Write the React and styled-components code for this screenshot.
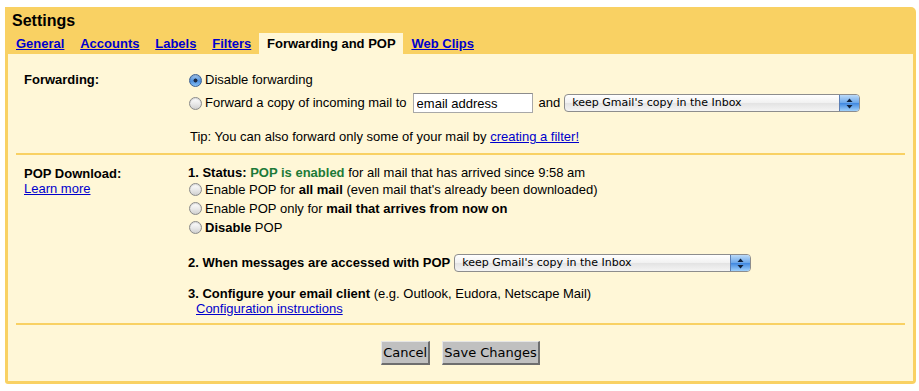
import React from "react";
import styled, { createGlobalStyle } from "styled-components";

const Global = createGlobalStyle`
  html, body { margin: 0; padding: 0; background: #ffffff; }
  body { font-family: "Liberation Sans", Arial, sans-serif; font-size: 13px; color: #000; }
`;

const YELLOW = "#f9d163";
const CREAM = "#fff7d7";
const LINK = "#0000cc";

const Panel = styled.div`
  margin: 7px 3px 0 5px;
  width: 911px;
  background: ${YELLOW};
  border-radius: 0 5px 4px 3px;
  padding: 0 3px 3px 3px;
  box-sizing: border-box;
`;

const Title = styled.h1`
  margin: 0;
  height: 26px;
  line-height: 27px;
  padding-left: 4px;
  font-size: 16px;
  font-weight: bold;
`;

const Tabs = styled.div`
  display: flex;
  height: 21px;
`;

const Tab = styled.a`
  display: block;
  padding: 0 7.8px 0 8px;
  line-height: 22px;
  font-weight: bold;
  font-size: 13px;
  color: ${(p) => (p.$active ? "#000" : LINK)};
  text-decoration: ${(p) => (p.$active ? "none" : "underline")};
  background: ${(p) => (p.$active ? CREAM : "transparent")};
  cursor: pointer;
`;

const Content = styled.div`
  background: ${CREAM};
  padding: 0 8px;
  height: 327px;
  box-sizing: border-box;
`;

const Section = styled.div`
  display: grid;
  grid-template-columns: 172px 1fr;
  padding: ${(p) => p.$pad};
  border-bottom: 2px solid ${YELLOW};
`;

const Label = styled.div`
  padding: ${(p) => p.$pt || "0"} 0 0 8px;
  font-weight: bold;
  line-height: ${(p) => p.$lh || "20px"};
`;

const LabelLink = styled.a`
  display: block;
  font-weight: normal;
  color: ${LINK};
  text-decoration: underline;
`;

const Col = styled.div`
  display: flex;
  flex-direction: column;
`;

const Row = styled.div`
  display: flex;
  align-items: center;
  min-height: ${(p) => p.$h || "20px"};
  margin-top: ${(p) => p.$mt || "0"};
  padding-left: ${(p) => p.$indent || "0"};
  line-height: ${(p) => p.$lh || "16px"};
  white-space: nowrap;
`;

const Radio = styled.span`
  display: inline-block;
  width: 13px;
  height: 13px;
  border-radius: 50%;
  margin: 0 3px 0 1px;
  box-sizing: border-box;
  border: 1px solid ${(p) => (p.$checked ? "#3a5f94" : "#8a8a8a")};
  background: ${(p) =>
    p.$checked
      ? "radial-gradient(circle at 50% 50%, #1b2a44 0 1.7px, transparent 2.3px), linear-gradient(#a6cbf3, #4f8fdc 55%, #86c0f5)"
      : "linear-gradient(#ffffff, #e8e8e8 55%, #d0d0d0)"};
  box-shadow: inset 0 1px 1px rgba(0, 0, 0, 0.15);
  flex: none;
`;

const Bold = styled.b`
  font-weight: bold;
`;

const Green = styled.b`
  font-weight: bold;
  color: #1d7a38;
`;

const TextInput = styled.input`
  width: 120px;
  height: 20px;
  box-sizing: border-box;
  margin: 0 6px 0 6px;
  padding: 1px 3px 0;
  border: 1px solid #a8a8a8;
  border-top-color: #8c8c8c;
  font-family: "Liberation Sans", Arial, sans-serif;
  font-size: 13px;
  color: #000;
  background: #fff;
  outline: none;
`;

const SelectBox = styled.div`
  display: flex;
  align-items: stretch;
  width: ${(p) => p.$w}px;
  height: 18px;
  box-sizing: border-box;
  margin-left: ${(p) => p.$ml || "4px"};
  border: 1px solid #8d8d8d;
  border-radius: 4px;
  overflow: hidden;
  background: linear-gradient(#ffffff, #f1f1f1 50%, #e3e3e3 51%, #f4f4f4);
  font-family: "DejaVu Sans", "Lucida Grande", sans-serif;
  font-size: 11px;
`;

const SelectText = styled.span`
  flex: 1;
  padding-left: 7px;
  line-height: 16px;
  color: #000;
`;

const SelectArrow = styled.span`
  width: 19px;
  display: flex;
  align-items: center;
  justify-content: center;
  border-left: 1px solid #5c7fb5;
  background: linear-gradient(#bcdaf8, #6aa6ea 50%, #3f87e0 51%, #9fd0fb);
`;

const TextLink = styled.a`
  color: ${LINK};
  text-decoration: underline;
`;

const Buttons = styled.div`
  display: flex;
  justify-content: center;
  gap: 12px;
  padding-top: 16px;
`;

const Button = styled.button`
  height: 24px;
  padding: 0 1px;
  font-family: "DejaVu Sans", "Lucida Grande", sans-serif;
  font-size: 13px;
  color: #000;
  background: #c0c0c0;
  border-style: solid;
  border-color: #e6e6e6 #6e6e6e #6e6e6e #e6e6e6;
  border-width: 1px 2px 2px 1px;
  border-radius: 0;
  cursor: pointer;
`;

function Select({ w, ml }) {
  return (
    <SelectBox $w={w} $ml={ml}>
      <SelectText>keep Gmail's copy in the Inbox</SelectText>
      <SelectArrow>
        <svg width="7" height="11" viewBox="0 0 7 11">
          <path d="M3.5 0.5 L6.5 4 L0.5 4 Z" fill="#10203a" />
          <path d="M3.5 10.5 L6.5 7 L0.5 7 Z" fill="#10203a" />
        </svg>
      </SelectArrow>
    </SelectBox>
  );
}

const tabs = ["General", "Accounts", "Labels", "Filters", "Forwarding and POP", "Web Clips"];

export default function App() {
  return (
    <>
      <Global />
      <Panel>
        <Title>Settings</Title>
        <Tabs>
          {tabs.map((t) => (
            <Tab key={t} $active={t === "Forwarding and POP"}>
              {t}
            </Tab>
          ))}
        </Tabs>
        <Content>
          <Section $pad="16px 0 6px">
            <Label>Forwarding:</Label>
            <Col>
              <Row>
                <Radio $checked />
                Disable forwarding
              </Row>
              <Row $h="24px" $mt="1px">
                <Radio />
                Forward a copy of incoming mail to
                <TextInput defaultValue="email address" />
                and
                <Select w={296} />
              </Row>
              <Row $mt="12px" $indent="2px">
                Tip: You can also forward only some of your mail by&nbsp;<TextLink>creating a filter!</TextLink>
              </Row>
            </Col>
          </Section>
          <Section $pad="11px 0 7px">
            <Label $lh="15px" $pt="0px">
              POP Download:
              <LabelLink>Learn more</LabelLink>
            </Label>
            <Col>
              <Row $h="14px" $lh="14px">
                <Bold>1. Status:</Bold>&nbsp;<Green>POP is enabled</Green>&nbsp;for all mail that has arrived since 9:58 am
              </Row>
              <Row $h="19px">
                <Radio />
                Enable POP for&nbsp;<Bold>all mail</Bold>&nbsp;(even mail that's already been downloaded)
              </Row>
              <Row $h="19px">
                <Radio />
                Enable POP only for&nbsp;<Bold>mail that arrives from now on</Bold>
              </Row>
              <Row $h="19px">
                <Radio />
                <Bold>Disable</Bold>&nbsp;POP
              </Row>
              <Row $h="20px" $mt="16px">
                <Bold>2. When messages are accessed with POP</Bold>
                <Select w={297} ml="4px" />
              </Row>
              <Row $h="15px" $lh="15px" $mt="13px">
                <Bold>3. Configure your email client</Bold>&nbsp;(e.g. Outlook, Eudora, Netscape Mail)
              </Row>
              <Row $h="15px" $lh="15px" $indent="8px">
                <TextLink>Configuration instructions</TextLink>
              </Row>
            </Col>
          </Section>
          <Buttons>
            <Button>Cancel</Button>
            <Button>Save Changes</Button>
          </Buttons>
        </Content>
      </Panel>
    </>
  );
}
